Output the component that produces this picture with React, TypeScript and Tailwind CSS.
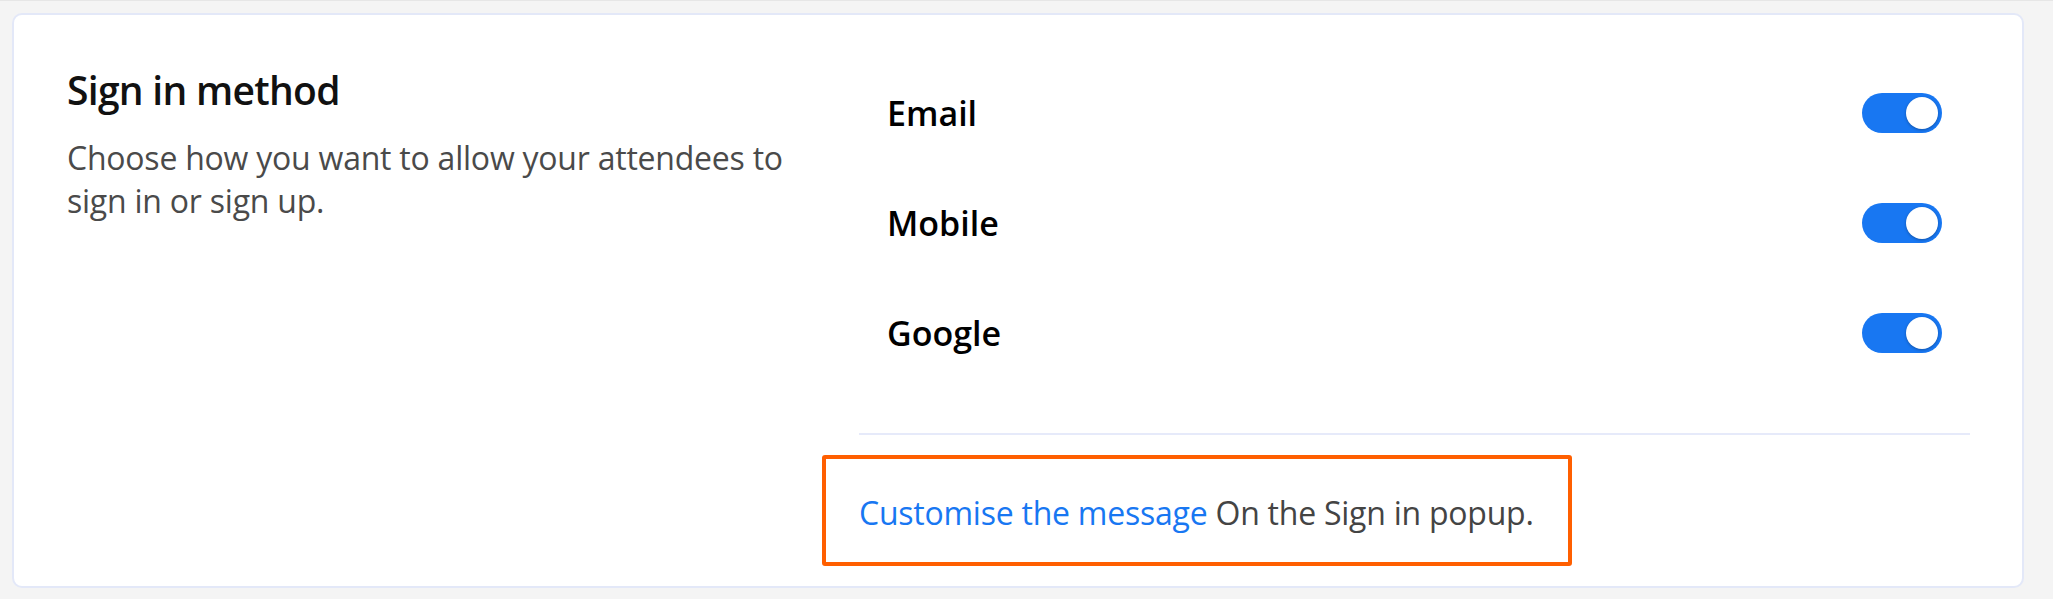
import React from "react";

const methods = ["Email", "Mobile", "Google"];

function Toggle() {
  return (
    <button
      type="button"
      className="flex h-[40px] w-[80px] items-center justify-end rounded-full bg-[#1877f2] p-[4px]"
    >
      <span className="block h-[32px] w-[32px] rounded-full bg-white shadow-[0_1px_3px_rgba(0,0,0,0.3)]" />
    </button>
  );
}

export default function App() {
  return (
    <div
      className="h-[599px] w-full overflow-hidden border-t border-[#e6e6e6] bg-[#f4f4f4] pl-[12px] pt-[12px]"
      style={{ fontFamily: '"Open Sans", "Noto Sans", sans-serif' }}
    >
      <div className="flex h-[575px] w-[2012px] rounded-[10px] border-2 border-[#e3e8f8] bg-white pl-[53px] pr-[52px] pt-[43px]">
        {/* left: title + description */}
        <div className="w-[792px] shrink-0">
          <h2 className="text-[39px] font-semibold leading-[64px] tracking-[-0.7px] text-[#111]">Sign in method</h2>
          <p className="mt-[14px] w-[740px] text-[32px] leading-[43px] tracking-[-0.23px] text-[#4a4a4a]">
            Choose how you want to allow your attendees to sign in or sign up.
          </p>
        </div>

        {/* right: methods */}
        <div className="flex-1">
          {methods.map((m) => (
            <div key={m} className="flex h-[110px] items-center justify-between px-[28px]">
              <span className="text-[34px] font-semibold text-black">{m}</span>
              <Toggle />
            </div>
          ))}

          <div className="mt-[45px] h-[2px] bg-[#e6eafa]" />

          <div className="mt-[56px]">
            <span className="relative inline-block text-[32px] leading-[44px] tracking-[-0.24px] text-[#444]">
              <a href="#" className="text-[#1877f2]">Customise the message</a> On the Sign in popup.
              <span className="pointer-events-none absolute -bottom-[31px] -left-[37px] -right-[38px] -top-[36px] rounded-[3px] border-4 border-[#ff5f00]" />
            </span>
          </div>
        </div>
      </div>
    </div>
  );
}
